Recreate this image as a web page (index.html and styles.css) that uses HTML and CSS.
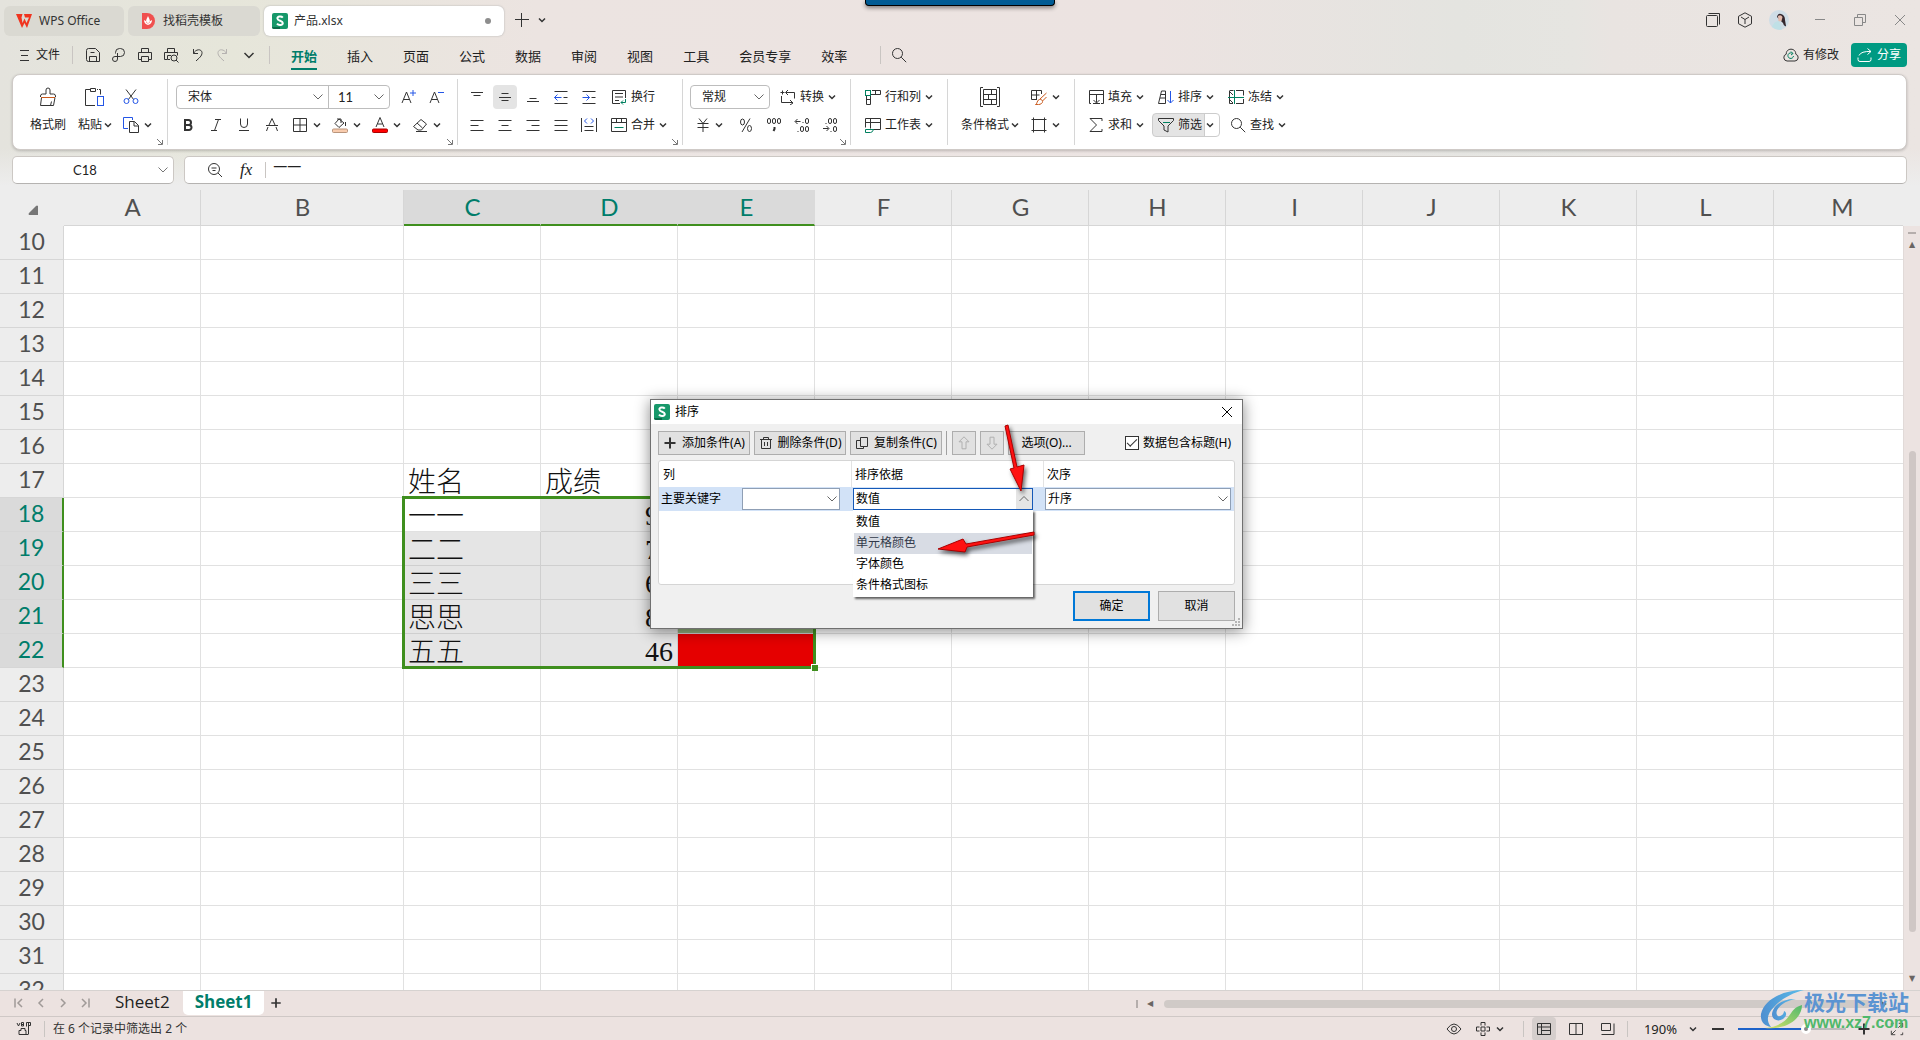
FILE: index.html
```html
<!DOCTYPE html>
<html lang="zh-CN">
<head>
<meta charset="utf-8">
<title>产品.xlsx - WPS Office</title>
<link rel="stylesheet" href="styles.css">
</head>
<body>
<svg class="sprite" aria-hidden="true">
  <symbol id="chev" viewBox="0 0 8 8"><path class="k15" d="M1 2.5 4 5.5 7 2.5"/></symbol>
  <symbol id="drop" viewBox="0 0 12 12"><path d="M1.5 3.5 6 8 10.500 3.500"/></symbol>
  <symbol id="up" viewBox="0 0 12 12"><path d="M1.500 8 6 3.500 10.500 8"/></symbol>
  <symbol id="launch" viewBox="0 0 8 8"><path d="M1 1 6 6M6.500 2V6.500H2"/></symbol>
  <symbol id="sheetlogo" viewBox="0 0 16 16"><rect class="lg" width="16" height="16" rx="2"/><path class="lgd" d="M0 14h8v2H2a2 2 0 0 1-2-2z"/><path class="w2" d="M10.800 4.600C9.500 3 5.400 3 5.400 5.500S10.800 7.600 10.800 10 6.500 12.500 5 10.600"/></symbol>
  <symbol id="menu" viewBox="0 0 16 16"><path d="M4 3.500h9M5 8.500h7M4 13.500h9"/></symbol>
  <symbol id="save" viewBox="0 0 16 16"><path d="M3.500 1.500h7l4 4v9h-11a2 2 0 0 1-2-2v-9a2 2 0 0 1 2-2zM5.500 5.500h4M4.500 14.500v-5h7v5"/></symbol>
  <symbol id="export" viewBox="0 0 16 16"><path d="M4.500 6.500v-1a4 4 0 0 1 4-4h1a4 4 0 0 1 0 8H4a2.500 2.500 0 1 0 2.500 2.500V6"/></symbol>
  <symbol id="print" viewBox="0 0 16 16"><path d="M4.500 5.500v-4h7v4M4 12.500H1.500v-7h13v7H12M4.500 9.500h7v5h-7z"/></symbol>
  <symbol id="preview" viewBox="0 0 16 16"><path d="M4.500 5.500v-4h7v4M4 12.500H1.500v-7h13v3M7 12.500H4.500v-4H8"/><circle cx="11" cy="11" r="3"/><path d="m13 13 2.500 2.500"/></symbol>
  <symbol id="undo" viewBox="0 0 16 16"><path d="M4.500 2v4.500H9M4.500 6.500c2-4.500 8-5 8.500-1 .3 3.500-3.500 6-6 8.500"/></symbol>
  <symbol id="redo" viewBox="0 0 16 16"><path d="M11.500 2v4.500H7M11.500 6.500c-2-4.500-8-5-8.500-1-.3 3.500 3.500 6 6 8.500"/></symbol>
  <symbol id="more" viewBox="0 0 16 16"><path class="k15" d="m3.500 6 4.500 4.500L12.500 6"/></symbol>
  <symbol id="search" viewBox="0 0 16 16"><circle cx="6.500" cy="6.500" r="5"/><path d="m10.200 10.200 5 5"/></symbol>
  <symbol id="brush" viewBox="0 0 20 20"><path d="M2.500 10v-1q0-2 2-2h3.500v-4a2 2 0 0 1 4 0v4h3.500q2 0 2 2v1M3.500 10.500l-1 8h13l1.500-8M13.500 14.500l-1 4"/><path class="o" d="M3 10.500h14"/></symbol>
  <symbol id="paste" viewBox="0 0 20 20"><path d="M6 2.500H.500v16H10M14 2.500h1.500v5M5.500 4.500v-3h5v3h-5zM12 2.500h1"/><rect class="b" x="12.500" y="9.500" width="6" height="9"/></symbol>
  <symbol id="cut" viewBox="0 0 16 16"><path d="M3 .5 11 11M13 .5 5 11"/><circle class="b" cx="3.500" cy="12" r="2.500"/><circle class="b" cx="12.500" cy="12" r="2.500"/></symbol>
  <symbol id="copy" viewBox="0 0 16 16"><path class="b" d="M5 11.500H.500V.500h9V3"/><path d="M6.500 4.500h5l4 4v7h-9zM11 4.500V9h4.500"/></symbol>
  <symbol id="abig" viewBox="0 0 16 16"><path d="M1 14 5.500 3 10 14M2.500 10.500h6"/><path class="b" d="M12 1v6M9 4h6"/></symbol>
  <symbol id="asmall" viewBox="0 0 16 16"><path d="M1 14 5.500 3 10 14M2.500 10.500h6"/><path class="b" d="M9 3.500h6"/></symbol>
  <symbol id="bold" viewBox="0 0 16 16"><path class="k2" d="M5 3h3.500a2.500 2.500 0 0 1 0 5H5h4a2.500 2.500 0 0 1 0 5H5z"/></symbol>
  <symbol id="italic" viewBox="0 0 16 16"><path d="M7 2.500h6M10.500 2.500l-4 11M3 13.500h6"/></symbol>
  <symbol id="under" viewBox="0 0 16 16"><path d="M4.500 1.500V7a3.500 3.500 0 0 0 7 0V1.500M3 13.500h10"/></symbol>
  <symbol id="strike" viewBox="0 0 16 16"><path d="M2 8.500h12M5 8 8 1.500 11 8M4 10l-1.500 4M12 10l1.500 4"/></symbol>
  <symbol id="grid" viewBox="0 0 16 16"><path d="M1.500 1.500h13v13h-13zM8 1.500v13M1.500 8h13"/></symbol>
  <symbol id="fill" viewBox="0 0 16 16"><path d="m7 2 5 4-5 4.500L3 6.500zM5 2h4v4M13.500 5v4"/><rect class="peach" x=".5" y="12" width="15" height="3.500" rx="1"/></symbol>
  <symbol id="fcolor" viewBox="0 0 16 16"><path d="M4 10 8 .5 12 10M5.500 7h5"/><rect class="red" x=".5" y="12" width="15" height="3.500" rx="1"/></symbol>
  <symbol id="erase" viewBox="0 0 16 16"><path d="M9 2.500 14.500 7l-5 6H6L1.500 9.500zM5 6l5.500 5M4 14.500h11"/></symbol>
  <symbol id="atop" viewBox="0 0 16 16"><path d="M2 3.500h12M4.500 6.500h7"/></symbol>
  <symbol id="amid" viewBox="0 0 16 16"><path d="M4.500 4.500h7M2 8.500h12M4.500 11.500h7"/></symbol>
  <symbol id="abot" viewBox="0 0 16 16"><path d="M4.500 9.500h7M2 12.500h12"/></symbol>
  <symbol id="outd" viewBox="0 0 16 16"><path d="M1.500 2.500h13M10.500 8.500h4M1.500 14.500h13"/><path class="b" d="M8.500 8.500h-7M4.500 5.500l-3 3 3 3"/></symbol>
  <symbol id="ind" viewBox="0 0 16 16"><path d="M1.500 2.500h13M10.500 8.500h4M1.500 14.500h13"/><path class="b" d="M1.500 8.500h7M5.500 5.500l3 3-3 3"/></symbol>
  <symbol id="al" viewBox="0 0 16 16"><path d="M1.500 3.500h13M1.500 8.500h8M1.500 13.500h13"/></symbol>
  <symbol id="ac" viewBox="0 0 16 16"><path d="M1.500 3.500h13M4.500 8.500h7M1.500 13.500h13"/></symbol>
  <symbol id="ar" viewBox="0 0 16 16"><path d="M1.500 3.500h13M6.500 8.500h8M1.500 13.500h13"/></symbol>
  <symbol id="aj" viewBox="0 0 16 16"><path d="M1.500 3.500h13M1.500 8.500h13M1.500 13.500h13"/></symbol>
  <symbol id="dist" viewBox="0 0 16 16"><path d="M.5 1v14M15.500 1v14M3.500 9.500h9M3.500 13.500h9"/><path class="b" d="M6 1.500l-2.500 2.500L6 6.500M10 1.500l2.500 2.500L10 6.500"/></symbol>
  <symbol id="wrap" viewBox="0 0 16 16"><path d="M9 14.500H1.500v-13h13V9M4 4.500h8M4 8h8M4 11.500h4"/><path class="g" d="M14.500 10v3.500H10M12 11.500l-2 2 2 2"/></symbol>
  <symbol id="merge" viewBox="0 0 16 16"><path d="M.5 1.500h15v13H.500zM.5 5.500h15M5.500 1.500v4M10.500 1.500v4"/><path class="g" d="M3.500 10.500h9"/></symbol>
  <symbol id="conv" viewBox="0 0 16 16"><path d="M.5 3.500h4M2.500 1.500v4M1.500 7v6.500H12M10 11l3 3-3 2M14.500 9.500V3.500H6M8 1 5.500 3.500 8 6"/></symbol>
  <symbol id="yen" viewBox="0 0 16 16"><path d="M4 1.500 8 6.500 12 1.500M2.500 6.500h11M2.500 10.500h11M8 6.500V15"/></symbol>
  <symbol id="pct" viewBox="0 0 16 16"><ellipse cx="4.500" cy="5" rx="2" ry="3"/><ellipse cx="11.500" cy="11.500" rx="2" ry="3"/><path d="M12 1.500 4 15"/></symbol>
  <symbol id="thou" viewBox="0 0 16 16"><rect x="1.500" y="1.500" width="3" height="5" rx="1.500"/><rect x="6.500" y="1.500" width="3" height="5" rx="1.500"/><rect x="11.500" y="1.500" width="3" height="5" rx="1.500"/><path class="k2" d="M8.500 10v2l-1 2"/></symbol>
  <symbol id="inc" viewBox="0 0 16 16"><path d="M6.500 4.500h-5M3.500 2l-2.500 2.500L3.500 7M8.500 5.500h1M3.500 14.500h1"/><rect x="11.500" y="1.500" width="3" height="5" rx="1.500"/><rect x="6.500" y="9.500" width="3" height="5" rx="1.500"/><rect x="11.500" y="9.500" width="3" height="5" rx="1.500"/></symbol>
  <symbol id="dec" viewBox="0 0 16 16"><path d="M1 11.500h5.500M4.500 9l2.500 2.500L4.500 14M8.500 14.500h1M3.500 6.500h1"/><rect x="11.500" y="9.500" width="3" height="5" rx="1.500"/><rect x="6.500" y="1.500" width="3" height="5" rx="1.500"/><rect x="11.500" y="1.500" width="3" height="5" rx="1.500"/></symbol>
  <symbol id="rowcol" viewBox="0 0 16 16"><path d="M7 1.500h8.500v4H6M10.500 1.500v4M1.500 7v8.500h4V7M1.500 10.500h4"/><rect class="g" x=".5" y="1.500" width="5" height="5"/></symbol>
  <symbol id="wsheet" viewBox="0 0 16 16"><path d="M.5 10.500v-9h15v11H8M.5 5.500h15M5.500 1.500v10"/><path class="g" d="M.5 12.500h8q-1 3-3 3h-5z"/></symbol>
  <symbol id="cond" viewBox="0 0 20 20"><path d="M3 .500H.500v19H3M17 .500h2.500v19H17M3.500 2.500h13v15h-13zM3.500 7.500h13M3.500 12.500h13M8.500 7.500v5M11.500 2.500v5M11.500 12.500v5"/></symbol>
  <symbol id="cstyle" viewBox="0 0 16 16"><path d="M6 10.500H.500v-9h10V5M.5 6h8M5.500 1.500v9"/><path class="o" d="M15.500 4 9 10M15.500 8l-4 4M4.500 15.500c2 0 1-4.500 4-5s4 2.500 2 4-4 1-6 1z"/></symbol>
  <symbol id="frame" viewBox="0 0 16 16"><path d="M2.500.5v15M13.500.5v15M.5 2.500h15M.5 13.500h15"/></symbol>
  <symbol id="filld" viewBox="0 0 16 16"><path d="M3 14.500H1.500v-13h14v13H13M1.500 5.500h14M8.500 5.500v8M5.500 11l3 3 3-3M5 14.500h7"/></symbol>
  <symbol id="sum" viewBox="0 0 16 16"><path d="M14 4V1.500H2L8.500 8 2 14.500h12V12"/></symbol>
  <symbol id="sort" viewBox="0 0 16 16"><path d="M.5 14.500 3.500 2h4v12.500zM3 5.500h4.500M2 9h5.500"/><path class="b" d="M12.500 2v12M9.500 11l3 3 3-3"/></symbol>
  <symbol id="funnel" viewBox="0 0 16 16"><path d="M.5 1.500h15v2L10 9v6l-4-2V9L.500 3.500z"/><path class="g" d="M5 5.500h7"/></symbol>
  <symbol id="freeze" viewBox="0 0 16 16"><path d="M1.500 1.500h4M1.500 2v12.500H5M8 1.500h7.500v5M15.500 10v4.500H8M2 3l3 3M2 11l3 3"/><path class="g" d="M6.500 1v14M0 8.500h16"/></symbol>
  <symbol id="zoomo" viewBox="0 0 16 16"><circle cx="7" cy="7" r="5.500"/><path d="m11 11 4 4M4.500 6h5M5.500 8.500h3"/></symbol>
  <symbol id="win" viewBox="0 0 16 16"><path d="M3.500 1.500h11v11"/><rect x="1.500" y="3.500" width="11" height="11" rx="1"/></symbol>
  <symbol id="cube" viewBox="0 0 16 16"><path d="m8 .8 6.500 3.500v7.500L8 15.200l-6.500-3.500V4.300zM4 5l4 2.500L12 5M8 7.500V12"/></symbol>
  <symbol id="cloud" viewBox="0 0 16 16"><path d="M4 14a3.500 3.500 0 0 1-.8-6.800C3 .5 13 .5 12.800 7.200A3.500 3.500 0 0 1 12 14z"/><path class="g" d="M9.500 6.500A2.800 2.800 0 1 0 10.500 9M8 4.500l2 2-2 1.500"/></symbol>
  <symbol id="share" viewBox="0 0 16 16"><path d="M1 10.500v2q0 2 2 2h9q2 0 2-2v-2M2 8.500Q4 4 14 4.500M10.500 1.500l3.500 3-3.500 3"/></symbol>
  <symbol id="trash" viewBox="0 0 14 14"><path d="M1 3.500h12M4.500 3V1.500h5V3M2.500 3.500v9h9v-9M5.500 6v4M8.500 6v4"/></symbol>
  <symbol id="dup" viewBox="0 0 14 14"><path d="M5.500 1.500h7v9h-7zM5 4.500H1.500v8h7V11"/></symbol>
  <symbol id="plus" viewBox="0 0 14 14"><path class="k2" d="M7 1.500v11M1.500 7h11"/></symbol>
  <symbol id="plusthin" viewBox="0 0 14 14"><path d="M6.500 0v14M0 6.500h14"/></symbol>
  <symbol id="aup" viewBox="0 0 14 14"><path d="m7 .8 5 5H9v7H5v-7H2z"/></symbol>
  <symbol id="adown" viewBox="0 0 14 14"><path d="m7 13.200 5-5H9v-7H5v7H2z"/></symbol>
  <symbol id="first" viewBox="0 0 12 12"><path class="k15" d="M2 1.500v9M9 2 5 6l4 4"/></symbol>
  <symbol id="prev" viewBox="0 0 12 12"><path class="k15" d="M8 2 4 6l4 4"/></symbol>
  <symbol id="next" viewBox="0 0 12 12"><path class="k15" d="m4 2 4 4-4 4"/></symbol>
  <symbol id="last" viewBox="0 0 12 12"><path class="k15" d="M10 1.500v9M3 2l4 4-4 4"/></symbol>
  <symbol id="vb" viewBox="0 0 16 16"><path d="M1 2l1.500 3L4 2M5.500 1.500h2v3.500h-2zM5.500 3.500h2M10.500 5.500v-4h4v3h-2M12.500 2v11M3 9.500v4h9.500M3 9.500h2v-2h4v2h1v4"/></symbol>
  <symbol id="eye" viewBox="0 0 16 16"><path d="M1 8q7-10 14 0-7 10-14 0z"/><circle cx="8" cy="8" r="2.500"/></symbol>
  <symbol id="cross4" viewBox="0 0 16 16"><path d="M6 4.500v-3h4v3M6 11.500v3h4v-3M4.500 6h-3v4h3M11.500 6h3v4h-3M6 6h4v4H6z"/></symbol>
  <symbol id="vnorm" viewBox="0 0 16 16"><path d="M1.500 2.500h13v11h-13zM1.500 6h13M5.500 2.500v11M5.500 9.500h9"/></symbol>
  <symbol id="vpage" viewBox="0 0 16 16"><path d="M1.500 2.500h13v11h-13zM8 2.500v11"/></symbol>
  <symbol id="vread" viewBox="0 0 16 16"><path d="M1.500 2.500h9v7h-9zM1.500 13.500h12.500v-11"/></symbol>
  <symbol id="full" viewBox="0 0 16 16"><path d="M10 1.500h4.500V6M6 14.500H1.500V10M14 2 9.500 6.500M2 14l4.500-4.500M1.500 4V1.500H4M14.500 12v2.500H12"/></symbol>
</svg>

<header class="top">
  <div class="titlebar">
    <button class="doc home"><svg class="logo" viewBox="0 0 16 14"><path class="wps" d="M0 0h6.500L5.500 3.500 6.500 9 8.500 4.500 10.500 9 13 3.500H9L8 0h8L11 14 8.500 9 6 14z"/></svg>WPS Office</button>
    <button class="doc store"><svg class="logo" viewBox="0 0 16 16"><path class="docer" d="M2 0h5a8 8 0 0 1 0 16H2z"/><path class="leaf" d="M8 11c-3-2-2-4 0-8 2 4 3 6 0 8zM4 7q0 4 4 5 4-1 4-5-3 1-4 4-1-3-4-4z"/></svg>找稻壳模板</button>
    <button class="doc active"><svg class="logo"><use href="#sheetlogo"/></svg><span class="name">产品.xlsx</span><span class="dot"></span></button>
    <button class="tool newtab" aria-label="新建"><svg class="i14"><use href="#plusthin"/></svg></button>
    <button class="tool tabmenu" aria-label="标签列表"><svg class="i8"><use href="#chev"/></svg></button>
    <div class="wctl">
      <button class="tool w32" aria-label="窗口"><svg class="i16"><use href="#win"/></svg></button>
      <button class="tool w32" aria-label="应用"><svg class="i16"><use href="#cube"/></svg></button>
      <button class="tool user" aria-label="账户"><svg class="avatar" viewBox="0 0 20 20"><circle class="av1" cx="10" cy="10" r="10"/><path class="av2" d="M8 7q1-4 4-3 4 1 4 6l1 6q-2 1-3-3z"/><path class="av3" d="M9 6q3-2 4.500 1l-1 4-3 .5z"/><path class="av4" d="M3 17q2-6 7-6l3 8.500q-6 1-10-2.500z"/></svg></button>
      <button class="tool w40 dim" aria-label="最小化"><svg class="i16"><path d="M3 7.500h10"/></svg></button>
      <button class="tool w40 dim" aria-label="还原"><svg class="i16"><path d="M2.500 5.500h8v8h-8zM5.500 5V2.500h8v8H11"/></svg></button>
      <button class="tool w40 dim" aria-label="关闭"><svg class="i16"><path d="M3 3l10 10M13 3 3 13"/></svg></button>
    </div>
  </div>

  <nav class="menubar">
    <button class="tool file"><svg class="i16"><use href="#menu"/></svg>文件</button>
    <span class="vsep s1"></span>
    <button class="tool w26" aria-label="保存"><svg class="i16"><use href="#save"/></svg></button>
    <button class="tool w26" aria-label="输出"><svg class="i16"><use href="#export"/></svg></button>
    <button class="tool w26" aria-label="打印"><svg class="i16"><use href="#print"/></svg></button>
    <button class="tool w26" aria-label="预览"><svg class="i16"><use href="#preview"/></svg></button>
    <button class="tool w26" aria-label="撤销"><svg class="i16"><use href="#undo"/></svg></button>
    <button class="tool w26 faint" aria-label="恢复"><svg class="i16"><use href="#redo"/></svg></button>
    <button class="tool w26" aria-label="更多"><svg class="i16"><use href="#more"/></svg></button>
    <span class="vsep s2"></span>
    <a class="mtab on" href="#">开始</a><a class="mtab" href="#">插入</a><a class="mtab" href="#">页面</a><a class="mtab" href="#">公式</a><a class="mtab" href="#">数据</a><a class="mtab" href="#">审阅</a><a class="mtab" href="#">视图</a><a class="mtab" href="#">工具</a><a class="mtab" href="#">会员专享</a><a class="mtab" href="#">效率</a>
    <span class="vsep s3"></span>
    <button class="tool w26" aria-label="搜索"><svg class="i16"><use href="#search"/></svg></button>
    <div class="sync">
      <button class="tool"><svg class="i16"><use href="#cloud"/></svg>有修改</button>
      <button class="tool share"><svg class="i16"><use href="#share"/></svg>分享</button>
    </div>
  </nav>

  <section class="ribbon">
    <div class="group g1">
      <button class="big"><svg class="i20"><use href="#brush"/></svg><span>格式刷</span></button>
      <button class="big"><svg class="i20"><use href="#paste"/></svg><span>粘贴<svg class="i8"><use href="#chev"/></svg></span></button>
      <div class="rows">
        <div class="row"><button class="tool w28" aria-label="剪切"><svg class="i16"><use href="#cut"/></svg></button></div>
        <div class="row"><button class="tool ic" aria-label="复制"><svg class="i16"><use href="#copy"/></svg><svg class="i8"><use href="#chev"/></svg></button></div>
      </div>
      <svg class="launch"><use href="#launch"/></svg>
    </div>
    <div class="group g2">
      <div class="rows">
        <div class="row">
          <div class="combo">
            <label class="pick font"><select aria-label="字体"><option>宋体</option></select><svg class="i12"><use href="#drop"/></svg></label>
            <label class="pick size"><select aria-label="字号"><option>11</option></select><svg class="i12"><use href="#drop"/></svg></label>
          </div>
          <button class="tool w28" aria-label="增大字号"><svg class="i16"><use href="#abig"/></svg></button>
          <button class="tool w28" aria-label="减小字号"><svg class="i16"><use href="#asmall"/></svg></button>
        </div>
        <div class="row">
          <button class="tool w28" aria-label="加粗"><svg class="i16"><use href="#bold"/></svg></button>
          <button class="tool w28" aria-label="倾斜"><svg class="i16"><use href="#italic"/></svg></button>
          <button class="tool w28" aria-label="下划线"><svg class="i16"><use href="#under"/></svg></button>
          <button class="tool w28" aria-label="删除线"><svg class="i16"><use href="#strike"/></svg></button>
          <button class="tool ic" aria-label="边框"><svg class="i16"><use href="#grid"/></svg><svg class="i8"><use href="#chev"/></svg></button>
          <button class="tool ic" aria-label="填充颜色"><svg class="i16"><use href="#fill"/></svg><svg class="i8"><use href="#chev"/></svg></button>
          <button class="tool ic" aria-label="字体颜色"><svg class="i16"><use href="#fcolor"/></svg><svg class="i8"><use href="#chev"/></svg></button>
          <button class="tool ic" aria-label="清除"><svg class="i16"><use href="#erase"/></svg><svg class="i8"><use href="#chev"/></svg></button>
        </div>
      </div>
      <svg class="launch"><use href="#launch"/></svg>
    </div>
    <div class="group g3">
      <div class="rows">
        <div class="row">
          <button class="tool w28" aria-label="顶端对齐"><svg class="i16"><use href="#atop"/></svg></button>
          <button class="tool w28 sel" aria-label="垂直居中"><svg class="i16"><use href="#amid"/></svg></button>
          <button class="tool w28" aria-label="底端对齐"><svg class="i16"><use href="#abot"/></svg></button>
          <button class="tool w28" aria-label="减少缩进"><svg class="i16"><use href="#outd"/></svg></button>
          <button class="tool w28" aria-label="增加缩进"><svg class="i16"><use href="#ind"/></svg></button>
          <button class="tool tx"><svg class="i16"><use href="#wrap"/></svg>换行</button>
        </div>
        <div class="row">
          <button class="tool w28" aria-label="左对齐"><svg class="i16"><use href="#al"/></svg></button>
          <button class="tool w28" aria-label="居中"><svg class="i16"><use href="#ac"/></svg></button>
          <button class="tool w28" aria-label="右对齐"><svg class="i16"><use href="#ar"/></svg></button>
          <button class="tool w28" aria-label="两端对齐"><svg class="i16"><use href="#aj"/></svg></button>
          <button class="tool w28" aria-label="分散对齐"><svg class="i16"><use href="#dist"/></svg></button>
          <button class="tool tx"><svg class="i16"><use href="#merge"/></svg>合并<svg class="i8"><use href="#chev"/></svg></button>
        </div>
      </div>
      <svg class="launch"><use href="#launch"/></svg>
    </div>
    <div class="group g4">
      <div class="rows">
        <div class="row gap2">
          <label class="pick fmt"><select aria-label="数字格式"><option>常规</option></select><svg class="i12"><use href="#drop"/></svg></label>
          <button class="tool tx"><svg class="i16"><use href="#conv"/></svg>转换<svg class="i8"><use href="#chev"/></svg></button>
        </div>
        <div class="row">
          <button class="tool cur-fmt" aria-label="货币"><svg class="i16"><use href="#yen"/></svg><svg class="i8"><use href="#chev"/></svg></button>
          <button class="tool w28" aria-label="百分比"><svg class="i16"><use href="#pct"/></svg></button>
          <button class="tool w28" aria-label="千位分隔"><svg class="i16"><use href="#thou"/></svg></button>
          <button class="tool w28" aria-label="增加小数位"><svg class="i16"><use href="#inc"/></svg></button>
          <button class="tool w28" aria-label="减少小数位"><svg class="i16"><use href="#dec"/></svg></button>
        </div>
      </div>
      <svg class="launch"><use href="#launch"/></svg>
    </div>
    <div class="group g5">
      <div class="rows">
        <div class="row"><button class="tool tx"><svg class="i16"><use href="#rowcol"/></svg>行和列<svg class="i8"><use href="#chev"/></svg></button></div>
        <div class="row"><button class="tool tx"><svg class="i16"><use href="#wsheet"/></svg>工作表<svg class="i8"><use href="#chev"/></svg></button></div>
      </div>
    </div>
    <div class="group g6">
      <button class="big"><svg class="i20"><use href="#cond"/></svg><span>条件格式<svg class="i8"><use href="#chev"/></svg></span></button>
      <div class="rows">
        <div class="row"><button class="tool ic" aria-label="单元格样式"><svg class="i16"><use href="#cstyle"/></svg><svg class="i8"><use href="#chev"/></svg></button></div>
        <div class="row"><button class="tool ic" aria-label="表格样式"><svg class="i16"><use href="#frame"/></svg><svg class="i8"><use href="#chev"/></svg></button></div>
      </div>
    </div>
    <div class="group g7">
      <div class="rows">
        <div class="row">
          <button class="tool tx"><svg class="i16"><use href="#filld"/></svg>填充<svg class="i8"><use href="#chev"/></svg></button>
          <button class="tool tx"><svg class="i16"><use href="#sort"/></svg>排序<svg class="i8"><use href="#chev"/></svg></button>
          <button class="tool tx"><svg class="i16"><use href="#freeze"/></svg>冻结<svg class="i8"><use href="#chev"/></svg></button>
        </div>
        <div class="row">
          <button class="tool tx"><svg class="i16"><use href="#sum"/></svg>求和<svg class="i8"><use href="#chev"/></svg></button>
          <button class="tool tx split"><svg class="i16"><use href="#funnel"/></svg>筛选<svg class="i8"><use href="#chev"/></svg></button>
          <button class="tool tx"><svg class="i16"><use href="#search"/></svg>查找<svg class="i8"><use href="#chev"/></svg></button>
        </div>
      </div>
    </div>
  </section>

  <div class="formula">
    <div class="box cellname"><input value="C18" aria-label="名称框"><svg class="i12"><use href="#drop"/></svg></div>
    <div class="box fx"><svg class="i16"><use href="#zoomo"/></svg><em>fx</em><span class="vsep"></span><input value="一一" aria-label="编辑栏"></div>
  </div>
</header>

<main class="sheet">
  <div class="canvas">
    <table class="cells" id="cells"></table>
    <div class="selection"><span class="handle"></span></div>
  </div>
  <div class="vscroll">
    <span class="split-h"></span>
    <span class="tri up">▲</span>
    <span class="thumb"></span>
    <span class="tri">▼</span>
  </div>
</main>

<footer>
  <div class="sheetbar">
    <button class="tool snav" aria-label="第一张"><svg class="i12"><use href="#first"/></svg></button>
    <button class="tool snav" aria-label="上一张"><svg class="i12"><use href="#prev"/></svg></button>
    <button class="tool snav" aria-label="下一张"><svg class="i12"><use href="#next"/></svg></button>
    <button class="tool snav" aria-label="最后一张"><svg class="i12"><use href="#last"/></svg></button>
    <a class="stab" href="#">Sheet2</a>
    <a class="stab on" href="#">Sheet1</a>
    <button class="tool add" aria-label="新建工作表"><svg class="i12" viewBox="0 0 14 14"><use href="#plus"/></svg></button>
    <div class="hscroll"><span class="tick"></span><span class="tri">◀</span><span class="hthumb"></span><svg class="i8 rtri" viewBox="0 0 8 8"><path d="M1 1l6 3-6 3z"/></svg></div>
  </div>
  <div class="status">
    <svg class="i16"><use href="#vb"/></svg>
    <span class="vsep"></span>
    <span class="msg">在 6 个记录中筛选出 2 个</span>
    <div class="view">
      <button class="tool w32" aria-label="护眼"><svg class="i16"><use href="#eye"/></svg></button>
      <button class="tool ic" aria-label="阅读模式"><svg class="i16"><use href="#cross4"/></svg><svg class="i8"><use href="#chev"/></svg></button>
      <span class="vsep v1"></span>
      <button class="tool w32 sel" aria-label="普通视图"><svg class="i16"><use href="#vnorm"/></svg></button>
      <button class="tool w32" aria-label="分页预览"><svg class="i16"><use href="#vpage"/></svg></button>
      <button class="tool w32" aria-label="页面布局"><svg class="i16"><use href="#vread"/></svg></button>
      <span class="vsep v2"></span>
      <button class="tool zoomv">190%<svg class="i8"><use href="#chev"/></svg></button>
      <button class="tool w26" aria-label="缩小"><svg class="i16"><path class="k2" d="M2 8h12"/></svg></button>
      <input class="zoom" type="range" min="0" max="100" value="64" aria-label="缩放">
      <button class="tool w26" aria-label="放大"><svg class="i14"><use href="#plus"/></svg></button>
      <button class="tool w40" aria-label="全屏"><svg class="i14"><use href="#full"/></svg></button>
    </div>
  </div>
</footer>

<div class="topgrip"></div>

<div class="dialog" role="dialog" aria-label="排序">
  <div class="dtitle"><svg class="i16"><use href="#sheetlogo"/></svg><span>排序</span><button class="tool close" aria-label="关闭"><svg class="i14"><path d="M2 2l10 10M12 2 2 12"/></svg></button></div>
  <div class="dbody">
    <div class="dtools">
      <button class="btn act"><svg class="i14"><use href="#plus"/></svg>添加条件(A)</button>
      <button class="btn act"><svg class="i14"><use href="#trash"/></svg>删除条件(D)</button>
      <button class="btn act"><svg class="i14"><use href="#dup"/></svg>复制条件(C)</button>
      <span class="dsep"></span>
      <button class="btn mv" aria-label="上移" disabled><svg class="i14"><use href="#aup"/></svg></button>
      <button class="btn mv" aria-label="下移" disabled><svg class="i14"><use href="#adown"/></svg></button>
      <button class="btn opt">选项(O)...</button>
      <label class="check"><input type="checkbox" checked>数据包含标题(H)</label>
    </div>
    <div class="list">
      <table class="conds">
        <colgroup><col class="c1"><col class="c2"><col></colgroup>
        <tr><th>列</th><th>排序依据</th><th>次序</th></tr>
        <tr class="cur">
          <td><div class="key"><label for="key">主要关键字</label><div class="pick dlg"><select id="key"></select><svg class="i12"><use href="#drop"/></svg></div></div></td>
          <td><div class="pick dlg by"><select aria-label="排序依据"><option>数值</option></select><span class="btnup"><svg class="i12"><use href="#up"/></svg></span>
            <ul class="options" role="listbox"><li role="option">数值</li><li role="option" class="hot" aria-selected="true">单元格颜色</li><li role="option">字体颜色</li><li role="option">条件格式图标</li></ul></div></td>
          <td><div class="pick dlg order"><select aria-label="次序"><option>升序</option></select><svg class="i12"><use href="#drop"/></svg></div></td>
        </tr>
      </table>
    </div>
    <div class="dfoot"><button class="btn ok">确定</button><button class="btn cancel">取消</button></div>
  </div>
  <svg class="sizegrip" viewBox="0 0 9 9"><path d="M6 0h2v2H6zM6 3h2v2H6zM3 3h2v2H3zM6 6h2v2H6zM3 6h2v2H3zM0 6h2v2H0z"/></svg>
  <svg class="arrows" viewBox="0 0 400 240"><path d="M354 26 357 25 366 67 373 65 370 91 359 69 363 68z"/><path d="M383 132v3L316 147 314 152 287 149 312 139 315 144z"/></svg>
</div>

<div class="watermark">
  <svg class="swirl" viewBox="0 0 44 40">
    <defs><linearGradient id="wa" x1="0" y1="0" x2="1" y2="0"><stop offset="0" stop-color="#4e8fd0"/><stop offset="1" stop-color="#59bdea"/></linearGradient><linearGradient id="wb" x1="0" y1="1" x2="1" y2="0"><stop offset="0" stop-color="#d9e26a"/><stop offset="1" stop-color="#4fb86b"/></linearGradient></defs>
    <path fill="url(#wa)" d="M44 0C22 0 4 10 1 24c-1 8 4 12 10 13-5-6-4-13 3-20C21 9 32 3 44 0z"/>
    <path fill="url(#wa)" d="M36 9C24 8 13 15 12 24c0 6 6 8 11 5 4-3 4-7 1-8 0 4-5 7-7 4-3-6 8-15 19-16z"/>
    <path fill="url(#wb)" d="M42 15C42 28 28 40 5 38c12-1 20-6 24-12 3-4 5-9 13-11z"/>
  </svg>
  <div><b>极光下载站</b><i>www.xz7.com</i></div>
</div>
<script src="sheet.js"></script>
</body>
</html>
```
FILE: sheet.js
```js
const cols = 'ABCDEFGHIJKLM'.split('');
const data = {
  17: ['姓名', '成绩'],
  18: ['一一', '90'],
  19: ['二二', '78'],
  20: ['三三', '65'],
  21: ['思思', '82'],
  22: ['五五', '46']
};
const picked = c => c === 'C' || c === 'D' || c === 'E';
let html = '<colgroup><col class="num">' +
  cols.map(c => `<col class="${c === 'B' ? 'wide' : 'std'}">`).join('') + '</colgroup><thead><tr>' +
  '<td class="corner"><svg viewBox="0 0 10 10"><path d="M10 1v9H1q-1-1 0-2l7-7q1-1 2 0z"/></svg></td>' +
  cols.map(c => `<th scope="col"${picked(c) ? ' class="hi"' : ''}>${c}</th>`).join('') + '</tr></thead><tbody>';
for (let r = 10; r <= 32; r++) {
  const inRange = r >= 18 && r <= 22;
  html += `<tr><th scope="row"${inRange ? ' class="hi"' : ''}>${r}</th>`;
  for (const c of cols) {
    const cls = [];
    if (inRange && picked(c) && !(r === 18 && c === 'C')) cls.push('in');
    if (c === 'D' && r > 17) cls.push('right');
    if (c === 'E' && r === 21) cls.push('green');
    if (c === 'E' && r === 22) cls.push('redcell');
    const v = data[r] ? (c === 'C' ? data[r][0] : c === 'D' ? data[r][1] : '') : '';
    html += `<td${cls.length ? ` class="${cls.join(' ')}"` : ''}>${v}</td>`;
  }
  html += '</tr>';
}
document.getElementById('cells').innerHTML = html + '</tbody>';
```
FILE: styles.css
```css
* { box-sizing: border-box; }
body {
  margin: 0;
  height: 100vh;
  display: flex;
  flex-direction: column;
  overflow: hidden;
  background: #ededed;
  color: #222;
  font: 12px/16px "Noto Sans", "Noto Sans CJK SC", sans-serif;
}
button, select, input { font: inherit; color: inherit; }
button { cursor: pointer; }
a { color: inherit; text-decoration: none; }

/* icons */
svg { fill: none; stroke: #333; stroke-width: 1; flex: none; display: block; }
.sprite { position: absolute; width: 0; height: 0; }
.i8 { width: 8px; height: 8px; }
.i12 { width: 12px; height: 12px; }
.i14 { width: 14px; height: 14px; }
.i16 { width: 16px; height: 16px; }
.i20 { width: 20px; height: 20px; }
.k15 { stroke-width: 1.5; }
.k2 { stroke-width: 2; }
.b { stroke: #2456e6; }
.g { stroke: #00805f; }
.o { stroke: #c9591c; }
.peach { fill: #f8cbad; stroke: #b9957c; }
.red { fill: #f00; stroke: #a00; }
.lg { fill: #17986a; stroke: none; }
.lgd { fill: #0b6b49; stroke: none; }
.w2 { stroke: #fff; stroke-width: 2; }
.wps { fill: #f0341f; stroke: none; }
.docer { fill: #f0504f; stroke: none; }
.leaf { fill: #fff; stroke: none; }

.tool {
  border: 0;
  background: none;
  padding: 0;
  height: 24px;
  display: flex;
  align-items: center;
  justify-content: center;
  gap: 4px;
  white-space: nowrap;
  border-radius: 4px;
}
.w26 { width: 26px; }
.w28 { width: 28px; }
.w32 { width: 32px; }
.w40 { width: 40px; }
.vsep { width: 1px; height: 16px; background: #c9c5c2; flex: none; }
.dim svg { stroke: #888; }
.faint svg { stroke: #b5b2b0; }

/* header */
.top {
  background:
    linear-gradient(#ededed00 148px, #ededed 186px),
    linear-gradient(90deg, #e4e3dd 0, #e6e6da 12%, #ece4e1 28%, #ece3e1 60%, #e4e4e0 76%, #e6e5e1 82%, #e9e4e1 84%, #ebe5e2 100%);
  padding-bottom: 6px;
}
.titlebar { display: flex; height: 40px; padding: 6px 0 4px 4px; gap: 4px; }
.doc {
  height: 30px;
  border: 0;
  border-radius: 6px;
  background: #dad9d2;
  display: flex;
  align-items: center;
  gap: 7px;
  padding: 0 12px;
  color: #333;
}
.home { width: 120px; }
.store { width: 132px; }
.active { width: 240px; background: #fff; padding: 0 13px 0 8px; gap: 6px; box-shadow: 0 0 2px #aaa; }
.active .name { flex: 1; text-align: left; }
.dot { width: 6px; height: 6px; border-radius: 3px; background: #8d8d8d; }
.logo { width: 16px; height: 16px; }
.newtab { width: 20px; height: 28px; margin-left: 4px; }
.tabmenu { width: 12px; height: 28px; }
.wctl { display: flex; margin-left: auto; }
.wctl .tool { height: 28px; }
.user { width: 39px; padding-right: 3px; }
.avatar { width: 20px; height: 20px; stroke: none; }
.av1 { fill: #cfdde6; }
.av2 { fill: #33272d; }
.av3 { fill: #e3bcae; }
.av4 { fill: #bfe0e6; }
.menubar { display: flex; align-items: center; height: 34px; padding: 0 13px 4px 16px; }
.s1 { margin: 0 7px 0 12px; height: 18px; }
.s2 { margin: 0 6px 0 7px; height: 18px; }
.s3 { margin: 0 5px 0 18px; height: 18px; }
.mtab {
  font-size: 13px;
  line-height: 22px;
  height: 29px;
  margin: 0 15px;
  padding-top: 4px;
}
.mtab.on { color: #007d6a; font-weight: 700; border-bottom: 2px solid #007d6a; }
.sync { display: flex; margin-left: auto; gap: 12px; }
.share { width: 56px; background: #009a82; color: #fff; }
.share svg { stroke: #fff; }

/* ribbon */
.ribbon {
  display: flex;
  height: 76px;
  margin: 0 13px 0 12px;
  padding: 4px 0;
  background: #fff;
  border: 1px solid #cfcac7;
  border-radius: 8px;
  box-shadow: 0 1px 3px #0003;
}
.group { display: flex; position: relative; padding-top: 6px; border-right: 1px solid #d6d6d6; }
.g1 { width: 155px; padding-left: 14px; gap: 6px; }
.g2 { width: 290px; padding-left: 6px; }
.g3 { width: 225px; padding-left: 5px; }
.g4 { width: 168px; padding-left: 7px; }
.g5 { width: 97px; padding-left: 6px; }
.g6 { width: 127px; padding-left: 10px; gap: 3px; }
.g7 { border: 0; padding-left: 5px; }
.g1 .rows { margin-left: -4px; }
.rows { display: grid; grid-template-rows: 24px 24px; row-gap: 4px; align-content: start; }
.row { display: flex; }
.gap2 { gap: 2px; }
.ic { width: 40px; gap: 5px; }
.cur-fmt { width: 42px; padding-right: 4px; }
.tx { padding: 0 6px 0 8px; }
.sel { background: #e4e4e4; }
.row .sel { width: 24px; margin: 0 2px; }
.big {
  border: 0;
  background: none;
  padding: 2px 3px 0;
  height: 52px;
  display: flex;
  flex-direction: column;
  align-items: center;
  gap: 10px;
  white-space: nowrap;
}
.big span { display: flex; align-items: center; gap: 2px; }
.launch { position: absolute; right: 3px; bottom: -1px; width: 8px; height: 8px; stroke: #777; }
.split { border: 1px solid #ccc; background: linear-gradient(90deg, #e4e4e4 51px, #ccc 51px 52px, #fff 52px); padding: 0 5px; margin: 0 2px; }
.pick { display: grid; grid-template-columns: 1fr 20px; align-items: center; }
.pick select {
  appearance: none;
  border: 0;
  background: none;
  outline: 0;
  grid-area: 1 / 1 / 2 / 3;
  width: 100%;
  height: 100%;
  padding: 0 11px;
}
.pick > svg { grid-area: 1 / 2; justify-self: center; pointer-events: none; stroke: #666; }
.combo { display: flex; width: 214px; height: 24px; margin: 0 5px 0 2px; border: 1px solid #bdbdbd; border-radius: 4px; }
.font { width: 152px; border-right: 1px solid #bdbdbd; }
.size { flex: 1; font: 13px/16px Lato, sans-serif; }
.size select { padding: 0 9px; }
.fmt { width: 80px; height: 24px; border: 1px solid #bdbdbd; border-radius: 4px; }

.formula { display: flex; gap: 10px; padding: 6px 13px 0 12px; }
.box { display: flex; align-items: center; height: 28px; background: #fff; border: 1px solid #ccc8c4; border-bottom-color: #b5b3b1; border-radius: 5px; }
.box input { border: 0; outline: 0; background: none; min-width: 0; }
.cellname { width: 162px; padding: 0 4px 0 0; font: 13px/16px Lato, sans-serif; }
.cellname input { flex: 1; text-align: center; }
.cellname svg { stroke: #777; }
.fx { flex: 1; padding-left: 22px; font-size: 14px; }
.fx em { font: italic 17px/20px "Liberation Serif", serif; margin: 0 13px 0 17px; }
.fx .vsep { margin-right: 5px; }
.fx input { flex: 1; padding: 0 2px 6px; }

/* grid */
.sheet { flex: 1; min-height: 0; display: flex; border-bottom: 1px solid #d6d2d0; }
.canvas { flex: 1; min-width: 0; overflow: hidden; position: relative; }
.cells { table-layout: fixed; border-collapse: separate; border-spacing: 0; width: 1911px; background: #fff; }
.num { width: 64px; }
.std { width: 137px; }
.wide { width: 203px; }
.cells th, .cells td { height: 34px; padding: 0; border: 0 solid #e1e1e1; border-width: 0 1px 1px 0; overflow: hidden; }
.cells tbody td {
  font: 300 28px/28px "Liberation Serif", "Noto Sans CJK SC", serif;
  color: #111;
  padding: 4px 4px 0;
  white-space: nowrap;
}
.cells th { background: #ededed; color: #505050; font: 24px/30px Lato, sans-serif; border-color: #d6d6d6; }
.cells tbody th { font-size: 23px; padding-bottom: 3px; }
.cells thead th, .cells .corner { height: 36px; }
.cells thead th { padding: 0 0 1px 1px; }
.cells .corner { background: #ededed; border-color: #ededed; }
.corner svg { width: 10px; height: 10px; margin: 4px 0 0 28px; fill: #777; stroke: none; }
.cells th.hi { background: #dadada; color: #007d6a; }
.cells thead th.hi { border-right-color: #dadada; border-bottom: 2px solid #3f8f1e; }
.cells tbody th.hi { border-right: 2px solid #3f8f1e; }
.cells td.in { background: #e5e5e5; border-color: #cfcfcf; }
.cells tbody td.right { text-align: right; padding-top: 2px; }
.cells td.green { background: #8fac7a; }
.cells td.redcell { background: #e50000; border-color: #e50000; }
.selection { position: absolute; left: 402px; top: 306px; width: 414px; height: 173px; border: 3px solid #3f8f1e; }
.handle { position: absolute; right: -5px; bottom: -5px; width: 7px; height: 7px; background: #3f8f1e; border: 1px solid #fff; border-width: 1px 0 0 1px; }
.vscroll { width: 17px; margin-top: 36px; background: #ece3e1; display: flex; flex-direction: column; align-items: center; border-left: 1px solid #e1dad8; }
.split-h { width: 8px; height: 2px; background: #b5aeac; margin-top: 6px; }
.tri { font: 8px/10px "DejaVu Sans", sans-serif; color: #6a6563; }
.up { margin-top: 6px; }
.thumb { width: 7px; height: 63%; margin-top: 201px; margin-bottom: auto; border-radius: 4px; background: #cfc7c5; }
.vscroll .tri:last-child { margin-bottom: 6px; }

/* bottom bars */
footer { background: #ece2e0; }
.sheetbar { display: flex; height: 26px; border-bottom: 1px solid #cfc8c6; padding-left: 8px; }
.snav { width: 22px; }
.snav svg { stroke: #a09a98; }
.stab { font: 17px/22px "Open Sans", sans-serif; padding: 0 13px 1px; height: 24px; }
.stab:not(.on) { margin-left: 6px; }
.stab.on { background: #fff; color: #007d6a; font-weight: 700; border-radius: 0 0 5px 5px; padding: 0 12px; }
.add { width: 24px; }
.hscroll { display: flex; align-items: center; gap: 9px; width: 784px; margin-left: auto; padding-right: 32px; }
.hscroll .tri { margin-right: 2px; }
.rtri { fill: #6a6563; stroke: none; }
.tick { width: 2px; height: 8px; background: #b5aeac; }
.hthumb { flex: 1; height: 8px; border-radius: 4px; background: #d0cac7; }
.status { display: flex; align-items: center; height: 23px; padding-left: 16px; }
.status > .vsep { margin: 0 8px 0 12px; }
.msg { color: #333; word-break: keep-all; }
.view { display: flex; align-items: center; margin-left: auto; padding-right: 3px; }
.v1 { margin: 0 4px 0 13px; }
.v2 { margin: 0 4px 0 3px; }
.view .sel { background: #d5cecc; width: 24px; margin: 0 4px; }
.zoomv { font-size: 13px; gap: 12px; padding: 0 8px 0 12px; }
.zoom { appearance: none; width: 108px; height: 12px; margin: 0 5px 0 7px; background: linear-gradient(#1e62c9, #1e62c9) 0 50% / 64% 2px no-repeat, linear-gradient(#bbb, #bbb) 0 50% / 100% 2px no-repeat; }
.zoom::-webkit-slider-thumb { appearance: none; width: 10px; height: 10px; border-radius: 5px; background: #888; border: 3px solid #fff; }

.topgrip { position: absolute; left: 865px; top: 0; width: 190px; height: 6px; background: #005b94; border: 1px solid #000; border-top: 0; border-radius: 0 0 4px 4px; box-shadow: 0 2px 4px #0007; }

/* sort dialog */
.dialog { position: absolute; left: 650px; top: 399px; width: 593px; background: #f0f0f0; border: 1px solid #707070; box-shadow: 0 2px 14px #0007; color: #000; }
.dtitle { display: flex; align-items: center; height: 24px; background: #fff; padding: 0 3px; gap: 5px; }
.close { width: 24px; margin-left: auto; }
.close svg { stroke: #000; }
.dbody { padding: 7px; }
.dtools { display: flex; gap: 4px; height: 24px; }
.btn { border: 1px solid #adadad; background: #e1e1e1; padding: 0; display: flex; align-items: center; justify-content: center; gap: 5px; white-space: nowrap; color: #000; }
.act { width: 92px; }
.mv { width: 24px; }
.mv svg { stroke: #b0b0b0; }
.opt { width: 77px; }
.dsep { width: 1px; background: #a0a0a0; margin-right: 1px; }
.check { display: flex; align-items: center; gap: 4px; margin-left: auto; padding-right: 4px; }
.check input { appearance: none; width: 14px; height: 14px; margin: 0; border: 1px solid #333; background: #fff; display: grid; place-items: center; }
.check input::before { content: ""; width: 9px; height: 4px; border: solid #333; border-width: 0 0 1px 1px; transform: rotate(-45deg); margin-bottom: 3px; }
.list { height: 125px; margin-top: 5px; border: 1px solid #d5d5d5; border-radius: 3px; background: #fff; }
.conds { table-layout: fixed; width: 100%; border-spacing: 0; }
.c1 { width: 192px; }
.c2 { width: 192px; }
.conds th { height: 26px; padding: 1px 0 0 3px; text-align: left; font-weight: 400; border-left: 1px solid #e3e3e3; }
.conds th:first-child { border: 0; padding-left: 4px; }
.conds td { height: 24px; padding: 0 3px 0 2px; background: #d2e2f7; }
.key { display: flex; justify-content: space-between; align-items: center; padding-right: 8px; }
.key .pick { width: 98px; }
.dlg { position: relative; height: 22px; border: 1px solid #8f9fb5; background: #fff; grid-template-columns: 1fr 16px; }
.dlg > svg { justify-self: end; margin-right: 1px; }
.dlg select { padding: 0 2px; }
.by { width: 180px; border-color: #1559b8; }
.btnup { grid-area: 1 / 2; height: 20px; background: #e5e5e5; display: grid; place-items: center; pointer-events: none; }
.btnup svg { stroke: #666; }
.options { position: absolute; z-index: 1; left: -1px; right: -1px; top: 21px; margin: 0; padding: 2px 1px 1px; list-style: none; background: #fff; box-shadow: 2px 2px 2px #0009; }
.options li { height: 21px; line-height: 20px; padding-left: 2px; }
.options .hot { background: #d8dce4; color: #333a4a; }
.dfoot { display: flex; justify-content: flex-end; gap: 8px; padding-top: 6px; }
.dfoot .btn { width: 77px; height: 30px; }
.dfoot .ok { border: 2px solid #0078d7; }
.sizegrip { position: absolute; right: 1px; bottom: 1px; width: 9px; height: 9px; fill: #b5b5b5; stroke: none; }
.arrows { position: absolute; left: 0; top: 0; z-index: 2; width: 400px; height: 240px; fill: #f11; stroke: #a00; pointer-events: none; filter: drop-shadow(2px 3px 2px #0009); }

.watermark { position: absolute; right: 11px; bottom: 8px; display: flex; pointer-events: none; }
.swirl { width: 44px; height: 40px; margin-top: 2px; stroke: none; }
.watermark div { display: flex; flex-direction: column; }
.watermark b { font: 700 21px/26px "Noto Sans CJK SC", sans-serif; color: #5b94d2; }
.watermark i { font: 700 16px/18px "Liberation Sans", sans-serif; color: #4fb86b; }
```
